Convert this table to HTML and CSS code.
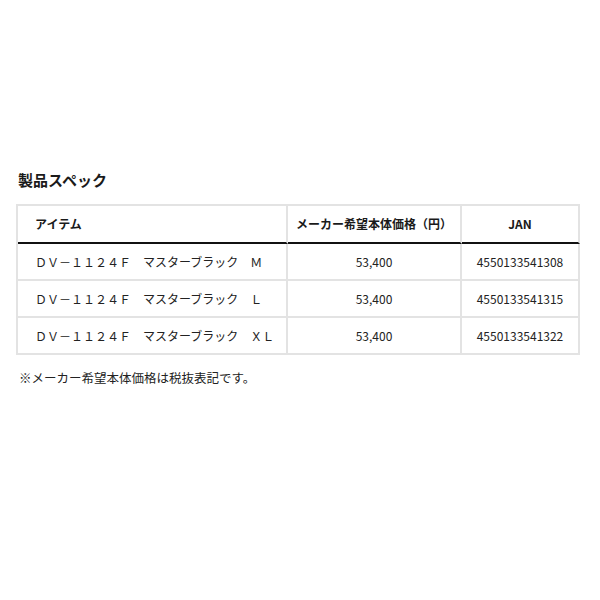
FILE: index.html
```html
<!DOCTYPE html>
<html lang="ja">
<head>
<meta charset="utf-8">
<title>製品スペック</title>
<link rel="stylesheet" href="styles.css">
</head>
<body>
<div class="spec">
  <h2 class="spec-title">製品スペック</h2>
  <table class="spec-table">
    <thead>
      <tr>
        <th class="col-item">アイテム</th>
        <th class="col-price">メーカー希望本体価格（円）</th>
        <th class="col-jan">JAN</th>
      </tr>
    </thead>
    <tbody>
      <tr>
        <td class="col-item">ＤＶ－１１２４Ｆ　マスターブラック　Ｍ</td>
        <td class="col-price">53,400</td>
        <td class="col-jan">4550133541308</td>
      </tr>
      <tr>
        <td class="col-item">ＤＶ－１１２４Ｆ　マスターブラック　Ｌ</td>
        <td class="col-price">53,400</td>
        <td class="col-jan">4550133541315</td>
      </tr>
      <tr>
        <td class="col-item">ＤＶ－１１２４Ｆ　マスターブラック　ＸＬ</td>
        <td class="col-price">53,400</td>
        <td class="col-jan">4550133541322</td>
      </tr>
    </tbody>
  </table>
  <p class="spec-note">※メーカー希望本体価格は税抜表記です。</p>
</div>
</body>
</html>
```
FILE: styles.css
```css
html, body {
  margin: 0;
  padding: 0;
  background: #ffffff;
}

body {
  font-family: "Noto Sans CJK JP", "Noto Sans", sans-serif;
  color: #222222;
}

.spec {
  width: 564px;
  margin-left: 16px;
  padding-top: 170px;
}

.spec-title {
  margin: 0 0 14px;
  padding-left: 2px;
  font-size: 15px;
  line-height: 20px;
  font-weight: 700;
  color: #1a1a1a;
}

.spec-table {
  width: 564px;
  border-collapse: separate;
  border-spacing: 0;
  border-top: 2px solid #e3e3e3;
  border-left: 2px solid #e3e3e3;
  table-layout: fixed;
  font-size: 12px;
}

.spec-table th,
.spec-table td {
  box-sizing: border-box;
  border-right: 2px solid #e3e3e3;
  border-bottom: 2px solid #e3e3e3;
  padding: 0;
  vertical-align: middle;
  line-height: 18px;
}

.spec-table th {
  height: 38px;
  font-weight: 700;
  border-bottom: 2px solid #111111;
  color: #1a1a1a;
}

.spec-table td {
  height: 37px;
  font-weight: 400;
}

.spec-table .col-item {
  width: 270px;
  text-align: left;
  padding-left: 17px;
}

.spec-table .col-price {
  width: 174px;
  text-align: center;
}

.spec-table .col-jan {
  width: 118px;
  text-align: center;
}

.spec-note {
  margin: 14px 0 0;
  padding-left: 3px;
  font-size: 12.5px;
  line-height: 18px;
}
```
